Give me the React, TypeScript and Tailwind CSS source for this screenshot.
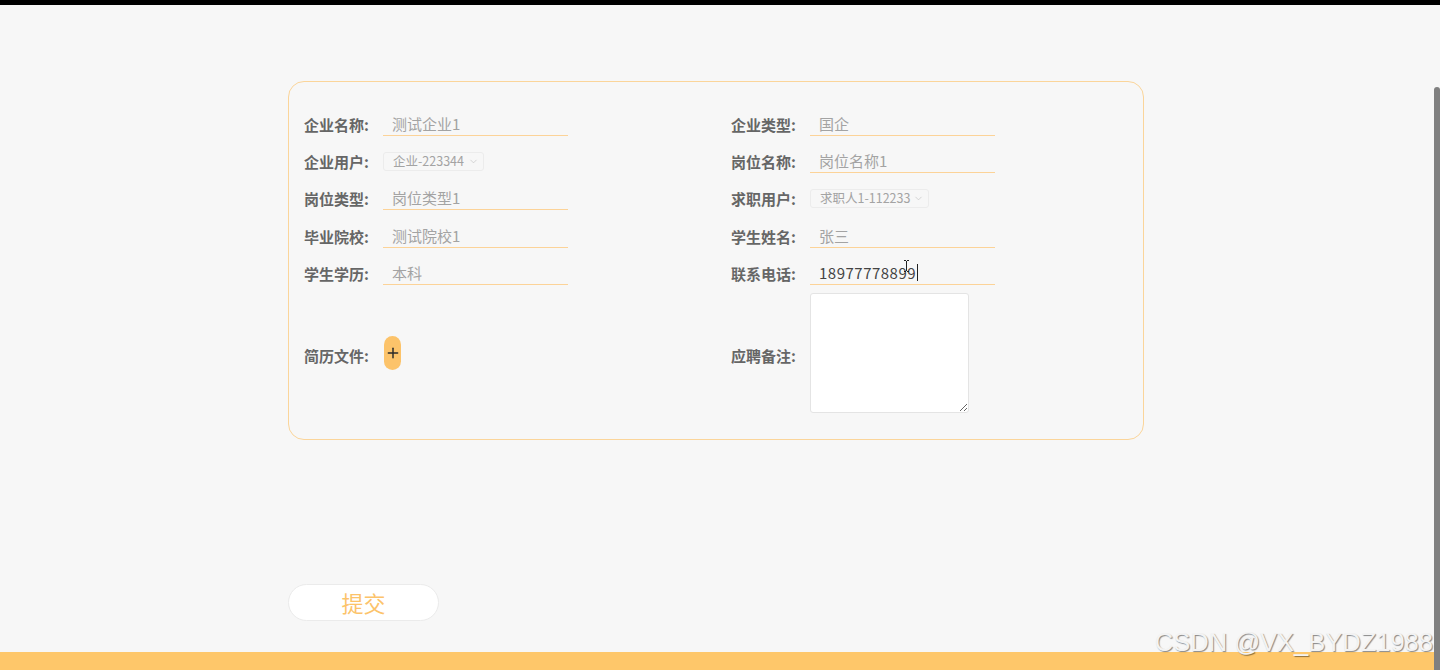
import { ChevronDown, Plus } from 'lucide-react';

const cjk = "font-['Noto_Sans_CJK_SC','Noto_Sans',sans-serif]";

type Field =
  | { label: string; kind: 'text'; value: string; active?: boolean }
  | { label: string; kind: 'select'; value: string; width: string };

const rows: { h: string; cells: [Field, Field] }[] = [
  {
    h: 'h-[37px]',
    cells: [
      { label: '企业名称', kind: 'text', value: '测试企业1' },
      { label: '企业类型', kind: 'text', value: '国企' },
    ],
  },
  {
    h: 'h-[37px]',
    cells: [
      { label: '企业用户', kind: 'select', value: '企业-223344', width: 'w-[101px]' },
      { label: '岗位名称', kind: 'text', value: '岗位名称1' },
    ],
  },
  {
    h: 'h-[38px]',
    cells: [
      { label: '岗位类型', kind: 'text', value: '岗位类型1' },
      { label: '求职用户', kind: 'select', value: '求职人1-112233', width: 'w-[119px]' },
    ],
  },
  {
    h: 'h-[37px]',
    cells: [
      { label: '毕业院校', kind: 'text', value: '测试院校1' },
      { label: '学生姓名', kind: 'text', value: '张三' },
    ],
  },
  {
    h: 'h-[38px]',
    cells: [
      { label: '学生学历', kind: 'text', value: '本科' },
      { label: '联系电话', kind: 'text', value: '18977778899', active: true },
    ],
  },
];

function IBeam() {
  return (
    <svg width="7" height="12" viewBox="0 0 7 12" className="absolute left-[93px] top-[-3px]">
      <path d="M1 0.5h2M4 0.5h2M3.5 1v10M1 11.5h2M4 11.5h2" stroke="#222" strokeWidth="1" fill="none" />
    </svg>
  );
}

function FieldCell({ f, h }: { f: Field; h: string }) {
  return (
    <div className={`flex ${h} items-start`}>
      <span className="mt-[8px] w-[79px] shrink-0 text-[15px] font-bold leading-[22px] text-[#666]">
        {f.label}:
      </span>
      {f.kind === 'text' ? (
        <div className="relative mt-[8px] flex h-[22px] w-[185px] items-center border-b border-[#fcd398] pb-[2px] pl-[9px]">
          <span
            className={`text-[15px] leading-none ${
              f.active ? 'tracking-[0.5px] text-[#444]' : 'text-[#a3a3a3]'
            }`}
          >
            {f.value}
          </span>
          {f.active && <span className="ml-[1px] h-[17px] w-px bg-[#222]" />}
          {f.active && <IBeam />}
        </div>
      ) : (
        <div
          className={`mt-[9px] flex h-[19px] ${f.width} items-center justify-between rounded-[3px] border border-[#ececec] pl-[9px] pr-[4px]`}
        >
          <span className="text-[12.5px] leading-none text-[#a3a3a3]">{f.value}</span>
          <ChevronDown size={11} strokeWidth={1.3} className="text-[#bbb]" />
        </div>
      )}
    </div>
  );
}

export default function App() {
  return (
    <div className={`relative h-[670px] w-[1440px] overflow-hidden bg-[#f7f7f7] ${cjk}`}>
      <div className="h-[5px] bg-black" />

      <div className="ml-[288px] mt-[76px] w-[856px] rounded-[16px] border border-[#fbd59a] pb-[26px] pl-[15px] pt-[24px]">
        {rows.map(({ h, cells: [l, r] }, i) => (
          <div key={i} className="grid grid-cols-[427px_1fr]">
            <FieldCell f={l} h={h} />
            <FieldCell f={r} h={h} />
          </div>
        ))}

        <div className="grid grid-cols-[427px_1fr]">
          <div className="flex h-[120px] items-center">
            <span className="mt-[6px] w-[80px] text-[15px] font-bold text-[#666]">简历文件:</span>
            <button className="flex h-[34px] w-[17px] items-center justify-center rounded-full bg-[#fcc36a] text-[#2a2a2a]">
              <Plus size={16} strokeWidth={2.2} />
            </button>
          </div>
          <div className="flex h-[120px] items-center">
            <span className="mt-[6px] w-[79px] text-[15px] font-bold text-[#666]">应聘备注:</span>
            <textarea className="h-[120px] w-[159px] resize rounded-[3px] border border-[#e4e4e4] bg-white outline-none" />
          </div>
        </div>
      </div>

      <div className="ml-[288px] mt-[144px] flex h-[37px] w-[151px] items-center justify-center rounded-full border border-[#ebebeb] bg-white">
        <span className="text-[22px] text-[#fcc36a]">提交</span>
      </div>

      <div className="mt-[31px] h-[18px] bg-[#fec76a]" />

      {/* scrollbar thumb */}
      <div className="absolute right-0 top-[87px] h-[583px] w-[6px] rounded-t-[3px] bg-[#808080]" />

      <div className="absolute right-[7px] top-[630px] text-[25.5px] leading-none text-[#f3f3f3] font-['Liberation_Sans',sans-serif] [text-shadow:1px_1px_1px_rgba(0,0,0,0.45)]">
        CSDN @VX_BYDZ1988
      </div>
    </div>
  );
}
